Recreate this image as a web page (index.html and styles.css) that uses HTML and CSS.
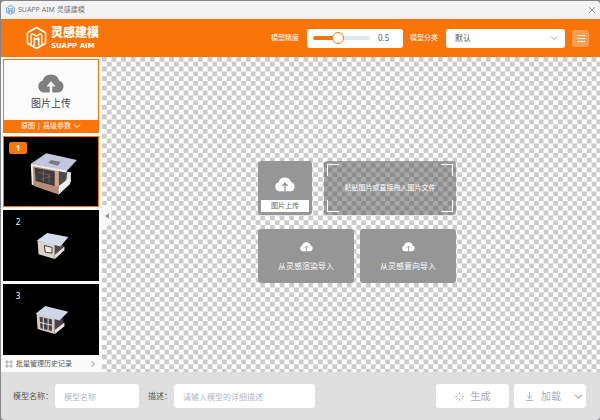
FILE: index.html
```html
<!DOCTYPE html>
<html lang="zh-CN">
<head>
<meta charset="UTF-8">
<meta name="viewport" content="width=device-width, initial-scale=1.0">
<title>SUAPP AIM 灵感建模</title>
<link rel="stylesheet" href="styles.css">
</head>
<body>
<!-- shared shapes -->
<svg class="defs" aria-hidden="true">
<symbol id="logo" viewBox="0 0 22 24">
<path d="M11 1 L20.500 6.500 V17.500 L11 23 L1.500 17.500 V6.500 Z M5.500 18.500 V10 Q5.500 6.500 8.500 8.500 L11 10 L13.500 8.500 Q16.500 6.500 16.500 10 V18.500 M8.700 20 V12 L11 13.500 L13.300 12 V20" fill="none" stroke="currentColor" stroke-width="1.600" stroke-linejoin="round"/>
</symbol>
<symbol id="cloud" viewBox="0 0 26 20">
<path d="M6 19.500 A6 6 0 0 1 4.500 7.800 A8.700 8.700 0 0 1 21.200 7.800 A6 6 0 0 1 20 19.500 H14.200 V13.500 H17.500 L13 8.300 L8.500 13.500 H11.800 V19.500 Z" fill="currentColor"/>
</symbol>
<symbol id="cloud-full" viewBox="0 0 26 20">
<path d="M6 19.500 A6 6 0 0 1 4.500 7.800 A8.700 8.700 0 0 1 21.200 7.800 A6 6 0 0 1 20 19.500 Z" fill="#fff"/>
<path d="M13 19.500 V10 M9.500 12.500 L13 9 L16.500 12.500" fill="none" stroke="#8c8c8c" stroke-width="1.600"/>
</symbol>
<symbol id="chevron" viewBox="0 0 8 8">
<path d="M1 2.500 L4 5.500 L7 2.500" fill="none" stroke="currentColor"/>
</symbol>
</svg>

<div class="window">
<div class="titlebar">
<svg class="title-logo"><use href="#logo"/></svg>
<span>SUAPP AIM 灵感建模</span>
<button class="close" type="button" aria-label="关闭"><svg viewBox="0 0 8 8"><path d="M1 1 L7 7 M7 1 L1 7" stroke="currentColor"/></svg></button>
</div>

<header class="header">
<svg class="brand-logo"><use href="#logo"/></svg>
<div class="brand">
<strong>灵感建模</strong>
<small>SUAPP AIM</small>
</div>
<label class="header-label" for="precision">模型精度</label>
<div class="slider-box">
<input type="range" id="precision" min="0" max="1.2" step="0.1" value="0.5">
<output for="precision">0.5</output>
</div>
<label class="header-label" for="category">模型分类</label>
<div class="select-box">
<select id="category"><option>默认</option></select>
<svg class="chevron"><use href="#chevron"/></svg>
</div>
<button class="menu" type="button" aria-label="菜单"><svg viewBox="0 0 8 8"><path d="M0 1.500 H8 M0 4.500 H8 M0 7.500 H8" stroke="currentColor"/></svg></button>
</header>

<div class="main">
<aside class="sidebar">
<div class="upload-card">
<button class="upload" type="button"><svg><use href="#cloud"/></svg>图片上传</button>
<div class="params">
<button type="button">原图</button><span>|</span><button type="button">高级参数</button>
<svg class="chevron"><use href="#chevron"/></svg>
</div>
</div>
<button class="thumb active" type="button">
<span class="number">1</span>
<svg viewBox="0 0 96 72">
<polygon points="28,29 56,34 56,60 30,51" fill="#b58d75"/>
<polygon points="56,34 69,37 68,49 56,60" fill="#e6e2e2"/>
<polygon points="56,35 65,36 64,45 56,51" fill="#4c4b50"/>
<polygon points="31,32 52,36 52,51 32,46" fill="#403b3b"/>
<path d="M35 37 L47 40 M37 44 L48 41 M40 35 V47 M46 38 V48" stroke="#6c6764"/>
<polygon points="52,35 56,35 56,52 52,51" fill="#d4a68b"/>
<polygon points="56,53 68,41 69,46 56,60" fill="#eeebeb"/>
<polygon points="27,28 43,17 75,24 64,36" fill="#c3c7dc"/>
<path d="M27 29 L64 36 M28 30 L29 50" stroke="#edeaf0" stroke-width="2"/>
<polygon points="48,24 58,26 55,30 45,27" fill="#777b89"/>
</svg>
</button>
<button class="thumb" type="button">
<span class="number">2</span>
<svg viewBox="0 0 96 72">
<polygon points="34,31 52,35 52,50 35,45" fill="#ddd2c8"/>
<polygon points="52,35 61,36 62,40 52,50" fill="#514b4b"/>
<polygon points="52,46 62,37 62,41 52,50" fill="#e4ded8"/>
<polygon points="33,31 44,23 66,27 58,37" fill="#d7dcec"/>
<path d="M41 36 L49 38 V44 L42 43 Z" fill="#f0ece9" stroke="#37343a"/>
</svg>
</button>
<button class="thumb" type="button">
<span class="number">3</span>
<svg viewBox="0 0 96 72">
<polygon points="33,30 52,35 52,51 34,46" fill="#d7cbc2"/>
<polygon points="52,35 61,36 61,41 52,51" fill="#46434a"/>
<polygon points="52,47 62,39 62,43 52,51" fill="#eae5e1"/>
<polygon points="32,30 42,22 66,28 57,37" fill="#d0d5e7"/>
<polygon points="36,33 49,36 49,48 37,45" fill="#454148"/>
<path d="M40 34 V46 M45 35 V47 M36 39 L49 42" stroke="#e8e3df"/>
</svg>
</button>
<button class="history" type="button">
<svg viewBox="0 0 8 8"><path d="M1 1 H3 V3 H1 Z M5 1 H7 V3 H5 Z M1 5 H3 V7 H1 Z M5 5 H7 V7 H5 Z" fill="none" stroke="currentColor" stroke-width=".6"/></svg>
<span>批量管理历史记录</span>
<svg viewBox="0 0 8 8"><path d="M2.500 1 L5.500 4 L2.500 7" fill="none" stroke="currentColor"/></svg>
</button>
<button class="collapse" type="button" aria-label="收起"><svg viewBox="0 0 4 6"><path d="M4 0 V6 L0 3 Z" fill="currentColor"/></svg></button>
</aside>

<main class="canvas">
<div class="row row-top">
<button class="tile tile-upload" type="button"><svg><use href="#cloud-full"/></svg><span>图片上传</span></button>
<div class="drop"><div class="corners">粘贴图片或直接拖入图片文件</div></div>
</div>
<div class="row">
<button class="tile tile-import" type="button"><svg><use href="#cloud-full"/></svg>从灵感渲染导入</button>
<button class="tile tile-import" type="button"><svg><use href="#cloud-full"/></svg>从灵感意向导入</button>
</div>
</main>
</div>

<footer class="footer">
<label for="modelName">模型名称：</label>
<input type="text" id="modelName" class="name-input" placeholder="模型名称">
<label for="modelDesc">描述：</label>
<input type="text" id="modelDesc" class="desc-input" placeholder="请输入模型的详细描述">
<button class="action generate" type="button" disabled>
<svg viewBox="0 0 10 10"><path d="M5 0 V2.500 M5 7.500 V10 M0 5 H2.500 M7.500 5 H10 M1.500 1.500 L3 3 M7 7 L8.500 8.500 M1.500 8.500 L3 7 M7 3 L8.500 1.500" stroke="currentColor"/></svg>
生成
</button>
<div class="load-group">
<button class="action" type="button" disabled>
<svg viewBox="0 0 10 10"><path d="M5 0.500 V7 M2 4 L5 7 L8 4 M1 9.500 H9" fill="none" stroke="currentColor"/></svg>
加载
</button>
<button class="action" type="button" aria-label="更多" disabled><svg class="chevron"><use href="#chevron"/></svg></button>
</div>
</footer>
</div>
</body>
</html>
```
FILE: styles.css
```css
* {
box-sizing: border-box;
}

body {
margin: 0;
padding: 1px 0 0 1px;
background: #85858a;
font-family: "Noto Sans", "Noto Sans CJK SC", sans-serif;
font-size: 8px;
line-height: 12px;
color: #555;
}

button, input, select {
margin: 0;
padding: 0;
border: none;
background: none;
font: inherit;
color: inherit;
}

svg {
flex: none;
}

.defs {
position: absolute;
width: 0;
height: 0;
}

.chevron {
width: 8px;
height: 8px;
}

.window {
display: flex;
flex-direction: column;
min-height: calc(100vh - 1px);
border-radius: 4px;
overflow: hidden;
background: #dfdfdf;
}

/* title bar */
.titlebar {
display: flex;
align-items: center;
gap: 3px;
height: 18px;
padding: 0 4px 0 5px;
background: #f3f3f3;
font-size: 7px;
color: #777;
}

.title-logo {
width: 9px;
height: 10px;
color: #3f7fc0;
}

.close {
display: flex;
margin-left: auto;
color: #999;
}

.close svg {
width: 8px;
height: 8px;
}

/* orange header */
.header {
display: flex;
align-items: center;
height: 38px;
padding: 0 11px 0 25px;
background: #f97509;
color: #fff;
}

.brand-logo {
width: 21px;
height: 24px;
}

.brand {
display: flex;
flex-direction: column;
gap: 2px;
margin: 0 auto 0 4px;
}

.brand strong {
font-size: 12px;
line-height: 14px;
font-weight: 900;
}

.brand small {
font-family: "DejaVu Sans", sans-serif;
font-size: 7px;
line-height: 8px;
font-weight: bold;
}

.header-label {
font-size: 7px;
margin-right: 8px;
}

.slider-box {
display: flex;
align-items: center;
gap: 8px;
width: 96px;
height: 19px;
margin-right: 7px;
padding: 0 6px;
border-radius: 3px;
background: #fff;
color: #666;
}

.slider-box input {
appearance: none;
width: 57px;
height: 12px;
}

.slider-box input::-webkit-slider-runnable-track {
height: 4px;
border-radius: 2px;
background: linear-gradient(to right, #f97509 42%, #e1e5ed 42%);
}

.slider-box input::-webkit-slider-thumb {
appearance: none;
width: 12px;
height: 12px;
margin-top: -4px;
border: 1px solid #f97509;
border-radius: 50%;
background: #fff;
}

.select-box {
display: flex;
align-items: center;
width: 119px;
height: 19px;
margin-right: 7px;
padding-right: 7px;
border-radius: 3px;
background: #fff;
color: #aaa;
}

.select-box select {
appearance: none;
flex: 1;
height: 19px;
padding-left: 9px;
color: #555;
}

.menu {
display: flex;
align-items: center;
justify-content: center;
width: 17px;
height: 17px;
border-radius: 3px;
background: #fc9d50;
}

.menu svg {
width: 8px;
height: 8px;
}

/* history column */
.main {
display: flex;
flex: 1;
}

.sidebar {
position: relative;
display: flex;
flex-direction: column;
gap: 3px;
width: 101px;
padding: 2px 3px 0 2px;
background: #fafafa;
}

.upload-card {
border: 1px solid #f97509;
background: #fbfbfb;
}

.upload {
display: flex;
flex-direction: column;
align-items: center;
justify-content: center;
gap: 3px;
width: 100%;
height: 60px;
padding-top: 3px;
font-size: 10px;
line-height: 14px;
color: #444;
}

.upload svg {
width: 26px;
height: 20px;
color: #808080;
}

.params {
display: flex;
align-items: center;
justify-content: center;
gap: 2px;
height: 12px;
background: #f97509;
font-size: 7px;
color: #fff;
}

.thumb {
position: relative;
height: 71px;
border: 1px solid #000;
background: #000;
color: #fff;
}

.thumb.active {
border-color: #f97509;
}

.thumb svg {
display: block;
width: 100%;
height: 100%;
}

.number {
position: absolute;
left: 5px;
top: 5px;
width: 18px;
border-radius: 2px;
text-align: center;
}

.active .number {
background: #f97509;
font-weight: bold;
}

.history {
display: flex;
align-items: center;
gap: 3px;
height: 12px;
padding: 0 2px;
font-size: 7px;
}

.history svg {
width: 8px;
height: 8px;
color: #888;
}

.history span {
flex: 1;
text-align: left;
}

.collapse {
position: absolute;
left: 100%;
top: 148px;
display: flex;
align-items: center;
justify-content: center;
width: 9px;
height: 21px;
border-radius: 0 3px 3px 0;
background: #f7f7f7;
color: #999;
}

.collapse svg {
width: 4px;
height: 6px;
}

/* drop area */
.canvas {
display: flex;
flex: 1;
flex-direction: column;
align-items: center;
justify-content: center;
gap: 14px;
padding: 15px 0 0 12px;
background: #fff url("data:image/svg+xml,%3Csvg xmlns='http://www.w3.org/2000/svg' width='48' height='48' viewBox='0 0 10 10'%3E%3Cpath d='M0 .5H10M0 2.5H10M0 4.5H10M0 6.5H10M0 8.5H10' stroke='%23cbcbcb' stroke-dasharray='1'/%3E%3Cpath d='M1 1.5H10M1 3.5H10M1 5.5H10M1 7.5H10M1 9.5H10' stroke='%23cbcbcb' stroke-dasharray='1'/%3E%3C/svg%3E");
}

.row {
display: flex;
gap: 6px;
}

.row-top {
gap: 12px;
}

.tile {
display: flex;
flex-direction: column;
align-items: center;
border-radius: 3px;
background: #969696;
color: #fff;
}

.tile-upload {
justify-content: space-between;
width: 54px;
height: 54px;
padding: 15px 3px 3px;
}

.tile-upload svg {
width: 20px;
height: 16px;
}

.tile-upload span {
width: 100%;
background: #fff;
font-size: 7px;
color: #666;
}

.tile-import {
justify-content: center;
gap: 8px;
width: 96px;
height: 54px;
}

.tile-import svg {
width: 13px;
height: 11px;
}

.drop {
width: 132px;
height: 54px;
padding: 3px;
border-radius: 3px;
background: rgba(80, 80, 80, 0.5);
font-size: 7px;
color: #fff;
}

.corners {
display: flex;
align-items: center;
justify-content: center;
height: 100%;
background:
linear-gradient(#fff, #fff) 0 0 / 12px 1px,
linear-gradient(#fff, #fff) 0 0 / 1px 12px,
linear-gradient(#fff, #fff) 100% 0 / 12px 1px,
linear-gradient(#fff, #fff) 100% 0 / 1px 12px,
linear-gradient(#fff, #fff) 0 100% / 12px 1px,
linear-gradient(#fff, #fff) 0 100% / 1px 12px,
linear-gradient(#fff, #fff) 100% 100% / 12px 1px,
linear-gradient(#fff, #fff) 100% 100% / 1px 12px;
background-repeat: no-repeat;
}

/* bottom bar */
.footer {
display: flex;
align-items: center;
height: 48px;
padding: 0 14px 0 12px;
}

.footer label {
margin-right: 2px;
}

.footer input {
height: 24px;
padding: 0 9px;
border-radius: 3px;
background: #fff;
}

.footer input::placeholder {
color: #b4b8c2;
}

.name-input {
width: 84px;
margin-right: 9px;
}

.desc-input {
width: 141px;
}

.action {
display: flex;
align-items: center;
justify-content: center;
gap: 7px;
height: 24px;
font-size: 10px;
color: #a8abb5;
}

.action svg {
width: 9px;
height: 9px;
}

.generate {
width: 73px;
margin: 0 5px 0 auto;
border-radius: 3px;
background: #fff;
}

.load-group {
display: flex;
justify-content: space-between;
width: 72px;
padding: 0 3px 0 11px;
border-radius: 3px;
background: #fff;
}
```
